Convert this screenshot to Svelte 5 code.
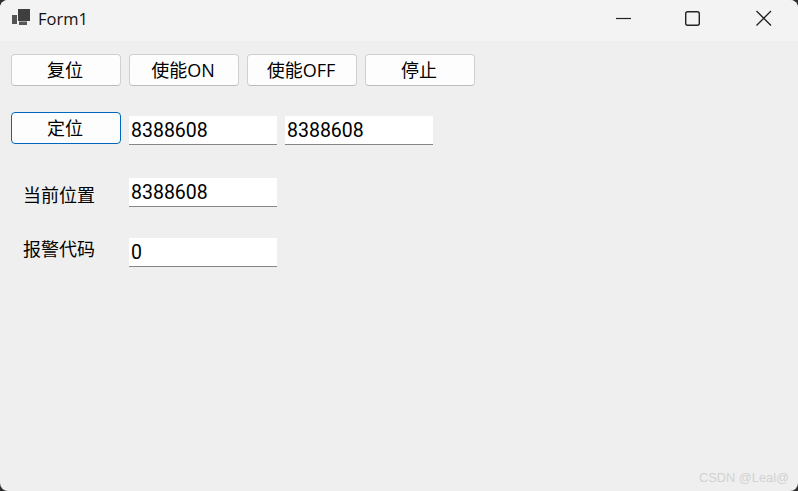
<script lang="ts">
	const topButtons = ['复位', '使能ON', '使能OFF', '停止'];
</script>

<div class="window">
	<header class="titlebar">
		<div class="title">
			<svg class="app-icon" width="18" height="17" viewBox="0 0 18 17">
				<rect x="0" y="7" width="5" height="9" fill="#555" />
				<rect x="6" y="1" width="12" height="12" fill="#3f3f3f" />
				<rect x="7" y="13.5" width="8" height="3.5" fill="#555" />
			</svg>
			<span>Form1</span>
		</div>
		<div class="controls">
			<svg width="72" height="41" viewBox="0 0 72 41">
				<path d="M34 18.5h15" stroke="#222" stroke-width="1.2" fill="none" />
			</svg>
			<svg width="72" height="41" viewBox="0 0 72 41">
				<rect x="31.7" y="11.7" width="13.6" height="13.6" rx="2" stroke="#222" stroke-width="1.4" fill="none" />
			</svg>
			<svg width="72" height="41" viewBox="0 0 72 41">
				<path d="M30.5 11l14.5 14.5M45 11L30.5 25.5" stroke="#222" stroke-width="1.3" fill="none" />
			</svg>
		</div>
	</header>

	<main class="form">
		<div class="row top-row">
			{#each topButtons as label}
				<button class="btn">{label}</button>
			{/each}
		</div>

		<div class="row move-row">
			<button class="btn focused">定位</button>
			<input class="field offset-field" value="8388608" />
			<input class="field offset-field" value="8388608" />
		</div>

		<div class="row pos-row">
			<span class="label">当前位置</span>
			<input class="field" value="8388608" />
		</div>

		<div class="row alarm-row">
			<span class="label">报警代码</span>
			<input class="field zero" value="0" />
		</div>

		<div class="watermark">CSDN @Leal@</div>
	</main>
</div>

<style>
	:global(body) {
		background: #2e2e2e;
		overflow: hidden;
	}

	.window {
		position: relative;
		display: flex;
		flex-direction: column;
		width: 798px;
		height: 491px;
		border-radius: 8px;
		overflow: hidden;
		background: #efefef;
		color: #000;
		font-family: 'Open Sans', 'Noto Sans CJK SC', sans-serif;
	}

	.titlebar {
		display: flex;
		justify-content: space-between;
		height: 41px;
		background: #f3f3f3;
	}

	.title {
		display: flex;
		align-items: center;
		gap: 8px;
		padding-left: 12px;
		font-size: 16.5px;
		color: #111;
	}

	.app-icon {
		margin-top: -8px;
	}

	.title span {
		margin-top: -4px;
	}

	.controls {
		display: flex;
	}

	.controls svg {
		display: block;
	}

	.form {
		flex: 1;
		display: flex;
		flex-direction: column;
		padding: 13px 0 0 11px;
	}

	.row {
		display: flex;
		gap: 8px;
	}

	.move-row {
		margin-top: 26px;
	}

	.pos-row {
		margin-top: 33px;
		height: 29px;
	}

	.alarm-row {
		margin-top: 31px;
		height: 29px;
	}

	.btn {
		box-sizing: border-box;
		width: 110px;
		height: 32px;
		padding: 0 2px 0 0;
		border: 1px solid #d0d0d0;
		border-bottom-color: #bdbdbd;
		border-radius: 4px;
		background: #fdfdfd;
		color: #000;
		font-family: 'Open Sans', 'Noto Sans CJK SC', sans-serif;
		font-size: 18px;
		line-height: 26px;
	}

	.focused {
		border-color: #0067c0;
	}

	.field {
		box-sizing: border-box;
		width: 148px;
		height: 29px;
		padding: 0 2px;
		border: 0;
		border-bottom: 1.5px solid #868686;
		border-radius: 0;
		outline: 0;
		background: #fff;
		color: #000;
		font-family: Roboto, sans-serif;
		font-size: 19.5px;
	}

	.offset-field {
		margin-top: 4px;
	}

	.label {
		width: 110px;
		padding-left: 12px;
		box-sizing: border-box;
		font-family: 'Noto Sans CJK SC', sans-serif;
		font-size: 18px;
		line-height: 26px;
	}

	.pos-row .label {
		margin-top: 3px;
	}

	.alarm-row .label {
		margin-top: -3px;
	}

	.watermark {
		position: absolute;
		right: 9px;
		bottom: 6px;
		color: #d2d2d2;
		font-family: 'Liberation Sans', sans-serif;
		font-size: 12.8px;
	}
</style>
